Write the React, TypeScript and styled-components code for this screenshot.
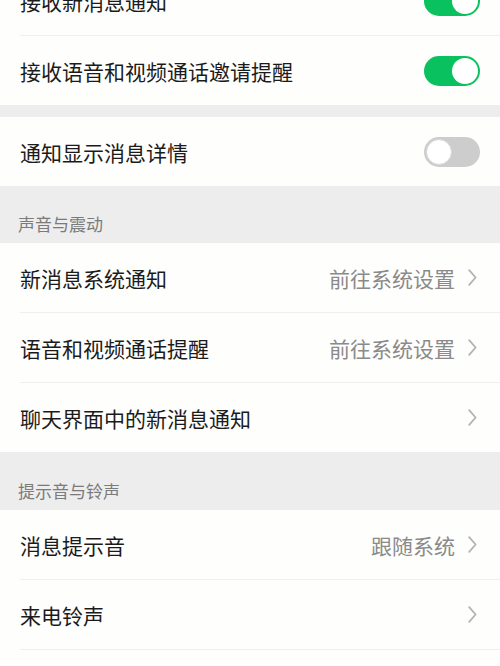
import React from "react";
import styled, { createGlobalStyle } from "styled-components";

const GlobalStyle = createGlobalStyle`
  html, body {
    margin: 0;
    padding: 0;
    background: #ffffff;
    overflow: hidden;
  }
  body {
    font-family: "Noto Sans CJK SC", "Noto Sans", sans-serif;
    -webkit-font-smoothing: antialiased;
  }
`;

const Page = styled.div`
  width: 500px;
  height: 666px;
  overflow: hidden;
  background: #ededed;
`;

const Scroller = styled.div`
  display: flex;
  flex-direction: column;
  margin-top: -34px;
`;

const Group = styled.div`
  display: flex;
  flex-direction: column;
  background: #fefefd;
`;

const Gap = styled.div`
  height: 12px;
`;

const SectionHeader = styled.div<{ $h: number }>`
  height: ${(p) => p.$h}px;
  display: flex;
  align-items: flex-end;
  padding: 0 0 7px 18px;
  box-sizing: border-box;
  font-size: 17px;
  line-height: 24px;
  color: #7b7b7b;
`;

const Row = styled.div`
  height: 69px;
  display: flex;
  align-items: center;
  padding: 0 20px;
  box-sizing: border-box;
`;

const Divider = styled.div`
  height: 1px;
  margin-left: 20px;
  background: #efefed;
`;

const Tail = styled.div`
  height: 40px;
`;

const Label = styled.span`
  flex: 1;
  font-size: 21px;
  line-height: 28px;
  color: #1b1b1b;
  white-space: nowrap;
`;

const Value = styled.span`
  font-size: 21px;
  line-height: 28px;
  color: #8a8a8a;
  white-space: nowrap;
`;

const Chevron = styled.svg`
  width: 9px;
  height: 17px;
  margin-left: 13px;
  margin-right: 3px;
  flex: none;
`;

const Track = styled.div<{ $on: boolean }>`
  width: 56px;
  height: 30px;
  border-radius: 15px;
  box-sizing: border-box;
  background: ${(p) => (p.$on ? "#0ac15f" : "#cdcdcd")};
  display: flex;
  align-items: center;
  justify-content: ${(p) => (p.$on ? "flex-end" : "flex-start")};
  padding: 2px;
  flex: none;
`;

const Knob = styled.div<{ $on: boolean }>`
  width: 26px;
  height: 26px;
  border-radius: 50%;
  background: #ffffff;
  box-sizing: border-box;
  border: ${(p) => (p.$on ? "none" : "1px solid #d6d6d6")};
`;

const Toggle = ({ on }: { on: boolean }) => (
  <Track $on={on}>
    <Knob $on={on} />
  </Track>
);

const Arrow = () => (
  <Chevron viewBox="0 0 9 17">
    <path
      d="M1.2 1.2 L7.6 8.5 L1.2 15.8"
      fill="none"
      stroke="#b3b3b3"
      strokeWidth="1.8"
      strokeLinecap="round"
      strokeLinejoin="round"
    />
  </Chevron>
);

type Item = { label: string; value?: string; toggle?: boolean };

const NavList = ({ items, more }: { items: Item[]; more?: boolean }) => (
  <Group>
    {items.map((it, i) => (
      <React.Fragment key={it.label}>
        {i > 0 && <Divider />}
        <Row>
          <Label>{it.label}</Label>
          {it.toggle !== undefined ? (
            <Toggle on={it.toggle} />
          ) : (
            <>
              {it.value && <Value>{it.value}</Value>}
              <Arrow />
            </>
          )}
        </Row>
      </React.Fragment>
    ))}
    {more && (
      <>
        <Divider />
        <Tail />
      </>
    )}
  </Group>
);

export default function App() {
  return (
    <>
      <GlobalStyle />
      <Page>
        <Scroller>
          <NavList
            items={[
              { label: "接收新消息通知", toggle: true },
              { label: "接收语音和视频通话邀请提醒", toggle: true },
            ]}
          />
          <Gap />
          <NavList items={[{ label: "通知显示消息详情", toggle: false }]} />
          <SectionHeader $h={57}>声音与震动</SectionHeader>
          <NavList
            items={[
              { label: "新消息系统通知", value: "前往系统设置" },
              { label: "语音和视频通话提醒", value: "前往系统设置" },
              { label: "聊天界面中的新消息通知" },
            ]}
          />
          <SectionHeader $h={58}>提示音与铃声</SectionHeader>
          <NavList
            more
            items={[
              { label: "消息提示音", value: "跟随系统" },
              { label: "来电铃声" },
            ]}
          />
        </Scroller>
      </Page>
    </>
  );
}
